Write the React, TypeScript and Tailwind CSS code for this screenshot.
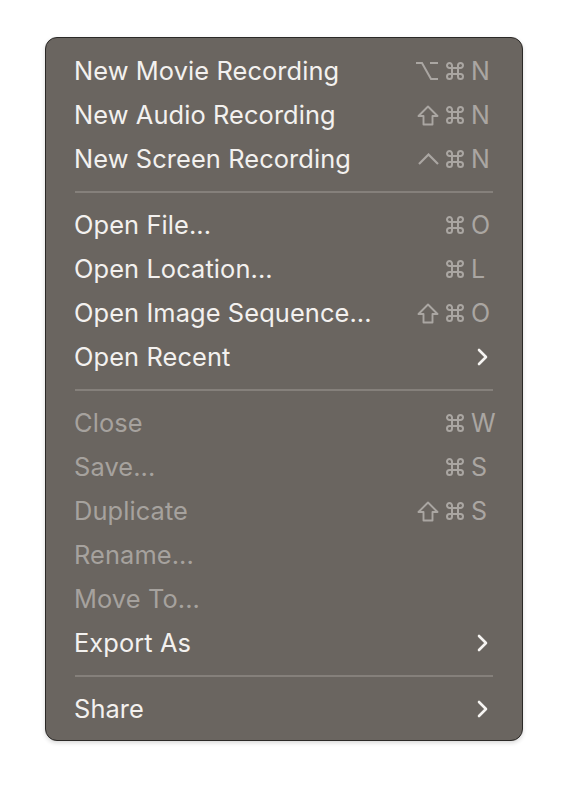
import React from "react";

type Mod = "opt" | "cmd" | "shift" | "ctrl";

type Item =
  | { kind: "item"; label: string; mods?: Mod[]; keyChar?: string; disabled?: boolean; submenu?: boolean }
  | { kind: "sep" };

const items: Item[] = [
  { kind: "item", label: "New Movie Recording", mods: ["opt", "cmd"], keyChar: "N" },
  { kind: "item", label: "New Audio Recording", mods: ["shift", "cmd"], keyChar: "N" },
  { kind: "item", label: "New Screen Recording", mods: ["ctrl", "cmd"], keyChar: "N" },
  { kind: "sep" },
  { kind: "item", label: "Open File...", mods: ["cmd"], keyChar: "O" },
  { kind: "item", label: "Open Location...", mods: ["cmd"], keyChar: "L" },
  { kind: "item", label: "Open Image Sequence...", mods: ["shift", "cmd"], keyChar: "O" },
  { kind: "item", label: "Open Recent", submenu: true },
  { kind: "sep" },
  { kind: "item", label: "Close", mods: ["cmd"], keyChar: "W", disabled: true },
  { kind: "item", label: "Save...", mods: ["cmd"], keyChar: "S", disabled: true },
  { kind: "item", label: "Duplicate", mods: ["shift", "cmd"], keyChar: "S", disabled: true },
  { kind: "item", label: "Rename...", disabled: true },
  { kind: "item", label: "Move To...", disabled: true },
  { kind: "item", label: "Export As", submenu: true },
  { kind: "sep" },
  { kind: "item", label: "Share", submenu: true },
];

function ModIcon({ mod }: { mod: Mod }) {
  const common = {
    fill: "none",
    stroke: "currentColor",
    strokeWidth: 2,
    strokeLinecap: "round" as const,
    strokeLinejoin: "round" as const,
  };
  if (mod === "cmd") {
    return (
      <svg width="20" height="20" viewBox="0 0 20 20" {...common}>
        <path d="M13 4.5v11a2.5 2.5 0 1 0 2.5-2.5h-11a2.5 2.5 0 1 0 2.5 2.5v-11a2.5 2.5 0 1 0-2.5 2.5h11a2.5 2.5 0 1 0-2.5-2.5" />
      </svg>
    );
  }
  if (mod === "opt") {
    return (
      <svg width="24" height="20" viewBox="0 0 24 20" {...common} strokeLinecap="butt" strokeLinejoin="miter">
        <path d="M1 2h6l9 16h7" />
        <path d="M15 2h8" />
      </svg>
    );
  }
  if (mod === "shift") {
    return (
      <svg width="22" height="21" viewBox="0 0 22 21" {...common} strokeWidth={1.9}>
        <path d="M11 1.5 1.5 11h5v8.5h9V11h5z" />
      </svg>
    );
  }
  return (
    <svg width="21" height="12" viewBox="0 0 21 12" {...common} strokeLinecap="butt" strokeLinejoin="miter" strokeWidth={2.2}>
      <path d="M1 11 10.5 1.5 20 11" />
    </svg>
  );
}

function Chevron() {
  return (
    <svg width="11" height="18" viewBox="0 0 11 18" fill="none" stroke="currentColor" strokeWidth={2.6} strokeLinecap="round" strokeLinejoin="round">
      <path d="M2 2l7 7-7 7" />
    </svg>
  );
}

export default function App() {
  return (
    <div className="min-h-screen bg-white pt-[37px] pl-[45px]" style={{ fontFamily: "Inter, 'Noto Sans', sans-serif" }}>
      <div className="w-[478px] rounded-[12px] border border-[#2b2927] bg-[#6a6560] pt-[11px] pb-[9px] shadow-[0_2px_4px_rgba(0,0,0,0.15)]">
        {items.map((it, i) =>
          it.kind === "sep" ? (
            <div key={i} className="flex h-[22px] items-center pl-[29px] pr-[29px]">
              <div className="h-[2px] w-full bg-[#85807b]" />
            </div>
          ) : (
            <div key={i} className="flex h-[44px] items-center pl-[28px] pr-[29px]">
              <span
                className={`flex-1 pt-[1px] text-[25.4px] tracking-[0.1px] ${it.disabled ? "text-[#a6a29e]" : "text-[#f3f1ef]"}`}
              >
                {it.label}
              </span>
              {it.submenu && (
                <span className="mr-[5px] flex items-center text-[#f6f4f2]">
                  <Chevron />
                </span>
              )}
              {it.mods && (
                <span className="flex items-center text-[#aaa6a2]">
                  <span className="flex items-center gap-[6px]">
                    {it.mods.map((m, j) => (
                      <ModIcon key={j} mod={m} />
                    ))}
                  </span>
                  <span className="ml-[6px] w-[22px] text-[25px] leading-none">{it.keyChar}</span>
                </span>
              )}
            </div>
          )
        )}
      </div>
    </div>
  );
}
